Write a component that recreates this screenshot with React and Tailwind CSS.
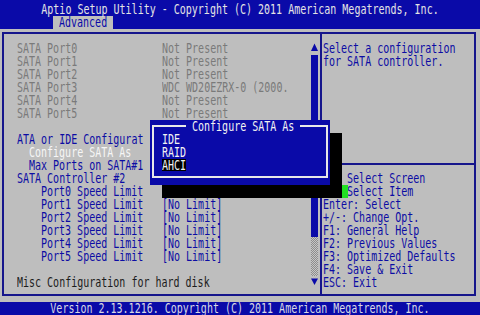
import React from "react";

function T({ children, className = "" }) {
  return (
    <span className={"inline-block whitespace-pre leading-[9px] scale-y-[1.35] " + className}>
      {children}
    </span>
  );
}

function Row({ children, className = "" }) {
  return <div className={"h-[13px] flex items-center " + className}>{children}</div>;
}

function Item({ label, value, indent = "", color = "text-[#0c0ca4]" }) {
  return (
    <Row className={"grid grid-cols-[145px_1fr] " + color}>
      <div className={"flex items-center " + indent}>
        <T>{label}</T>
      </div>
      <div className="flex items-center">{value ? <T>{value}</T> : null}</div>
    </Row>
  );
}

export default function App() {
  const gray = "text-[#7a7a7a]";
  const blue = "text-[#0c0ca4]";
  return (
    <div className="relative w-[480px] h-[315px] overflow-hidden bg-[#bebebe] font-['DejaVu_Sans_Mono',monospace] text-[10px] leading-[13px]">
      <header className="h-[28.5px] bg-[#0a0aa8] pt-[2.5px]">
        <Row className="justify-center text-[#e4e4e4]">
          <T>Aptio Setup Utility - Copyright (C) 2011 American Megatrends, Inc.</T>
        </Row>
        <div className="h-[13px] flex">
          <div className="ml-[53px] w-[60px] pl-[6px] bg-[#bebebe] text-[#0a0aa8] flex items-center">
            <T>Advanced</T>
          </div>
        </div>
      </header>

      <main className="mt-[3.5px] ml-[2px] w-[474px] h-[264px] border-2 border-[#16168c] flex">
        <section className="w-[316px] flex">
          <div className="w-[307px] pt-[7.5px] pl-[13px]">
            <Item label="SATA Port0" value="Not Present" color={gray} />
            <Item label="SATA Port1" value="Not Present" color={gray} />
            <Item label="SATA Port2" value="Not Present" color={gray} />
            <Item label="SATA Port3" value="WDC WD20EZRX-0 (2000." color={gray} />
            <Item label="SATA Port4" value="Not Present" color={gray} />
            <Item label="SATA Port5" value="Not Present" color={gray} />
            <Row />
            <Item label="ATA or IDE Configurat" value="" color={blue} />
            <Item label="Configure SATA As" value="" indent="pl-[12px]" color="text-[#f6f6f6]" />
            <Item label="Max Ports on SATA#1" value="" indent="pl-[12px]" color={blue} />
            <Item label="SATA Controller #2" value="" color={blue} />
            <Item label="Port0 Speed Limit" value="" indent="pl-[24px]" color={blue} />
            <Item label="Port1 Speed Limit" value="[No Limit]" indent="pl-[24px]" color={blue} />
            <Item label="Port2 Speed Limit" value="[No Limit]" indent="pl-[24px]" color={blue} />
            <Item label="Port3 Speed Limit" value="[No Limit]" indent="pl-[24px]" color={blue} />
            <Item label="Port4 Speed Limit" value="[No Limit]" indent="pl-[24px]" color={blue} />
            <Item label="Port5 Speed Limit" value="[No Limit]" indent="pl-[24px]" color={blue} />
            <Row />
            <Row className="text-[#1c1c1c]">
              <T>Misc Configuration for hard disk</T>
            </Row>
          </div>
          <div className="w-[7px] pt-[7.5px] flex flex-col">
            <div className="h-[13px]">
              <svg width="7" height="13" viewBox="0 0 7 13">
                <polygon points="3.5,1.5 7,9 0,9" fill="#0a0aa8" />
              </svg>
            </div>
            <div className="h-[182px] bg-[#0a0aa8]" />
            <div className="h-[39px] bg-[image:repeating-conic-gradient(#8c8c8c_0%_25%,#c6c6c6_0%_50%)] bg-[length:2px_2px]" />
            <div className="h-[13px]">
              <svg width="7" height="13" viewBox="0 0 7 13">
                <polygon points="0,2.5 7,2.5 3.5,9" fill="#0a0aa8" />
              </svg>
            </div>
          </div>
        </section>

        <aside className="flex-1 border-l-2 border-[#16168c] flex flex-col text-[#0c0ca4]">
          <div className="h-[131px] border-b-2 border-[#16168c] pt-[7.5px] pl-[1px]">
            <Row><T>Select a configuration</T></Row>
            <Row><T>for SATA controller.</T></Row>
          </div>
          <div className="pt-[6.5px] pl-[1px]">
            <Row><T>{"    Select Screen"}</T></Row>
            <Row><T>{"    Select Item"}</T></Row>
            <Row><T>Enter: Select</T></Row>
            <Row><T>+/-: Change Opt.</T></Row>
            <Row><T>F1: General Help</T></Row>
            <Row><T>F2: Previous Values</T></Row>
            <Row><T>F3: Optimized Defaults</T></Row>
            <Row><T>F4: Save &amp; Exit</T></Row>
            <Row><T>ESC: Exit</T></Row>
          </div>
        </aside>
      </main>

      <footer className="mt-[5.5px] h-[13.5px] bg-[#0a0aa8] flex items-center justify-center text-[#d8d8e4]">
        <T>Version 2.13.1216. Copyright (C) 2011 American Megatrends, Inc.</T>
      </footer>

      {/* popup shadow */}
      <div className="absolute left-[162px] top-[132.5px] w-[180px] h-[65px] bg-black" />
      {/* green cursor */}
      <div className="absolute left-[342px] top-[184.5px] w-[6px] h-[13px] bg-[#22e022]" />

      {/* popup */}
      <div className="absolute left-[150px] top-[119.5px] w-[180px] h-[65px] bg-[#0a0aa8] text-[#f2f2f2]">
        <div className="absolute left-[2px] right-[2px] top-[5.5px] bottom-[6.5px] border-2 border-[#e8e8e8]" />
        <div className="absolute left-[36px] top-0 h-[13px] bg-[#0a0aa8] flex items-center">
          <T> Configure SATA As </T>
        </div>
        <div className="relative pt-[13px] pl-[12px]">
          <Row><T>IDE</T></Row>
          <Row><T>RAID</T></Row>
          <Row>
            <span className="h-[12px] bg-black flex items-center">
              <T>AHCI</T>
            </span>
          </Row>
        </div>
      </div>
    </div>
  );
}
